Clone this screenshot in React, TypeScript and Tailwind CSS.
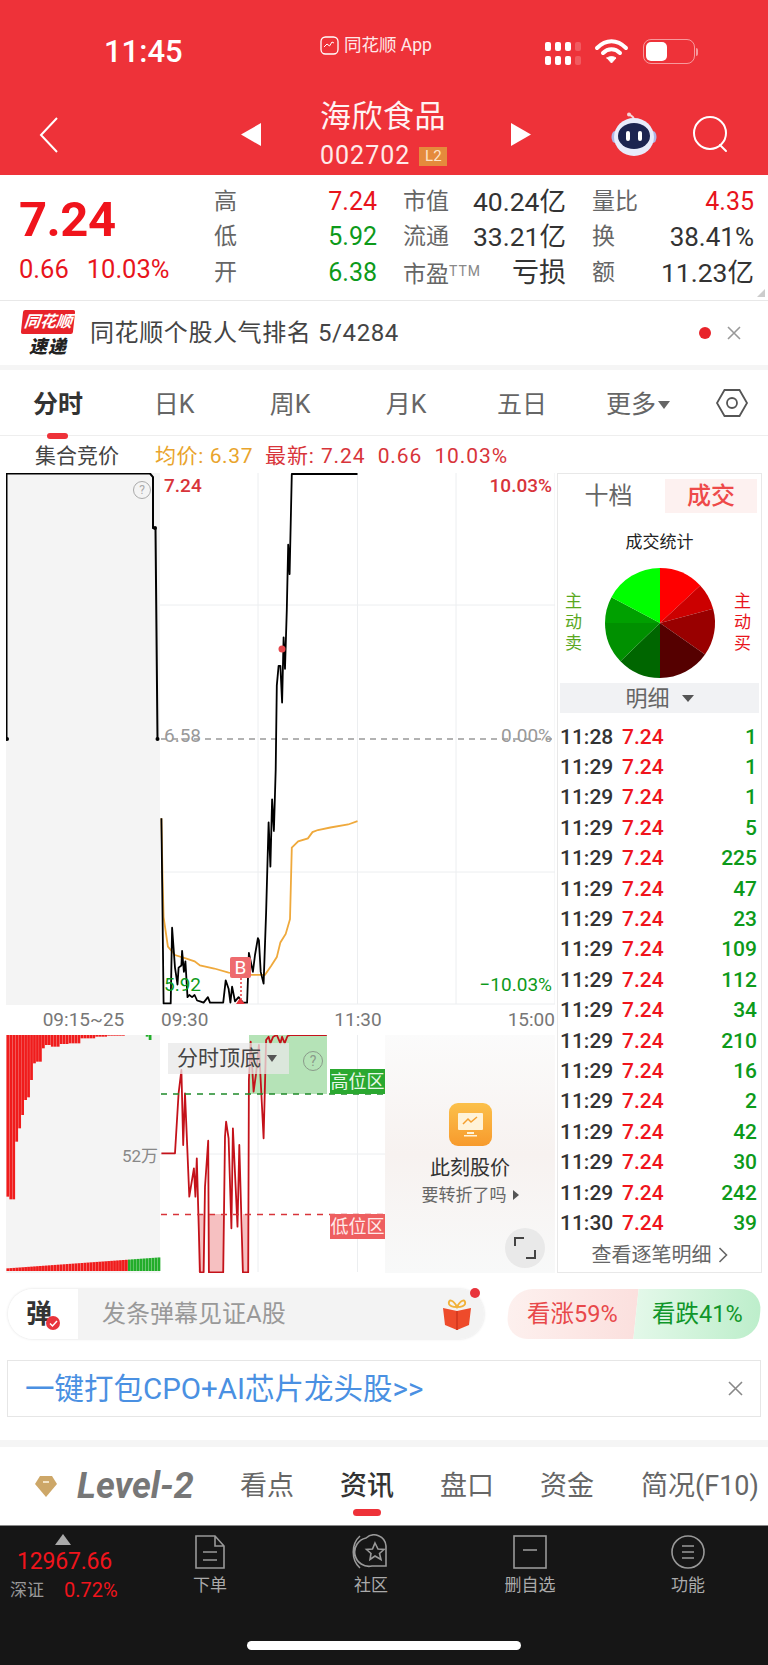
const RED = "#e8141c";

// traced from the reference chart, in zoomed crop coordinates
const priceTrace = [[452,1065],[458,1505],[478,1505],[482,1325],[490,1420],[497,1460],[500,1420],[508,1415],[510,1380],[515,1430],[519,1405],[525,1490],[530,1485],[538,1490],[545,1485],[552,1498],[560,1500],[570,1503],[582,1490],[588,1503],[625,1503],[632,1450],[640,1470],[645,1503],[650,1465],[658,1500],[668,1490],[680,1503],[692,1503],[697,1385],[708,1430],[714,1390],[722,1350],[725,1355],[730,1430],[738,1458],[745,1290],[752,1075],[757,1180],[762,1020],[767,1095],[772,950],[775,750],[780,703],[785,703],[790,790],[794,635],[798,710],[803,570],[807,415],[811,485],[817,247],[1001,247]];
const avgTrace = [[452,1065],[455,1200],[458,1300],[470,1370],[490,1390],[520,1398],[545,1405],[560,1415],[600,1422],[640,1432],[700,1437],[742,1437],[760,1415],[775,1395],[785,1360],[800,1340],[812,1305],[817,1135],[835,1120],[862,1113],[875,1098],[890,1093],[925,1087],[975,1080],[1001,1072]];
const topBottomTrace = [[452,400],[490,400],[500,220],[508,150],[513,375],[518,220],[530,530],[543,445],[547,530],[551,415],[560,757],[570,757],[574,500],[583,362],[585,757],[625,757],[630,350],[633,305],[640,355],[648,625],[652,325],[665,620],[670,375],[680,757],[695,757],[697,180],[702,65],[710,215],[717,160],[725,75],[738,355],[745,60],[752,50],[757,70],[765,50],[775,45],[785,70],[790,50],[797,70],[805,48],[815,45],[915,45]];
const redBarEdge = [[18,530],[25,538],[35,460],[42,365],[50,325],[55,285],[65,240],[72,232],[82,180],[90,130],[100,125],[112,85],[125,75],[135,80],[160,72],[190,70],[225,55],[260,50],[300,47],[350,43]];
const greenBarEdge = [[355,43],[385,45],[400,50],[415,60],[420,44],[445,44]];

const mainPts = (t: number[][]) => t.map(([x, y]) => `${(x / 2.8).toFixed(1)},${(y / 2.376 + 370).toFixed(1)}`).join(" ");
const lowPts = (t: number[][]) => t.map(([x, y]) => `${(x / 2.8).toFixed(1)},${(y / 3 + 1020).toFixed(1)}`).join(" ");

function edgeAt(edge: number[][], x: number) {
  let last = edge[0][1];
  for (const [ex, ey] of edge) {
    if (ex > x) return last;
    last = ey;
  }
  return last;
}

const barXs = Array.from({ length: 52 }, (_, i) => 18 + i * 8.3);

const quoteRows = [
  [["高", "7.24", "text-[25px] text-[#e8141c]"], ["市值", "40.24亿", "text-[26.500px] text-[#333]"], ["量比", "4.35", "text-[25px] text-[#e8141c]"]],
  [["低", "5.92", "text-[25px] text-[#0d9a1a]"], ["流通", "33.21亿", "text-[26.500px] text-[#333]"], ["换", "38.41%", "text-[26px] text-[#333]"]],
  [["开", "6.38", "text-[25px] text-[#0d9a1a]"], ["市盈", "亏损", "text-[27px] text-[#333]"], ["额", "11.23亿", "text-[26.500px] text-[#333]"]],
];

const ticks = [
  ["11:28", "1"], ["11:29", "1"], ["11:29", "1"], ["11:29", "5"], ["11:29", "225"], ["11:29", "47"],
  ["11:29", "23"], ["11:29", "109"], ["11:29", "112"], ["11:29", "34"], ["11:29", "210"], ["11:29", "16"],
  ["11:29", "2"], ["11:29", "42"], ["11:29", "30"], ["11:29", "242"], ["11:30", "39"],
];

const slices = [
  [0, 47, "#ff0000"], [47, 75, "#cc0000"], [75, 125, "#990000"], [125, 180, "#550000"],
  [180, 226, "#006600"], [226, 270, "#009000"], [270, 298, "#00a000"], [298, 360, "#00ff00"],
] as const;

function slicePath(from: number, to: number) {
  const r = 55;
  const pt = (a: number) => `${(60 + r * Math.sin((a * Math.PI) / 180)).toFixed(2)} ${(60 - r * Math.cos((a * Math.PI) / 180)).toFixed(2)}`;
  return `M60 60 L${pt(from)} A${r} ${r} 0 0 1 ${pt(to)} Z`;
}

function StatusBar() {
  return (
    <div className="flex h-[100px] items-start text-white">
      <div className="ml-[104px] mt-[33px] w-[216px] text-[31px] leading-[38px] font-medium">11:45</div>
      <div className="mt-[33px] flex w-[225px] items-center gap-[5px] text-[17.500px] leading-[24px] text-[#ffe9e9]">
        <svg width="19" height="19" viewBox="0 0 19 19" fill="none" stroke="#fff" strokeWidth="1.3">
          <rect x="1" y="1" width="17" height="17" rx="4.5" />
          <path d="M4 11l3-3 2.500 2L12 6l2 1" strokeWidth="1" />
        </svg>
        <span>同花顺 App</span>
      </div>
      <div className="mt-[42px] grid grid-cols-4 gap-x-[4px] gap-y-[5px]">
        {[0, 1, 2, 3, 4, 5, 6, 7].map((i) => (
          <span key={i} className={`h-[9px] w-[6px] rounded-[2px] ${i === 3 || i === 7 ? "bg-white/20" : "bg-white"}`} />
        ))}
      </div>
      <svg className="ml-[13px] mt-[38px]" width="35" height="26" viewBox="0 0 35 26" fill="none" stroke="#fff" strokeLinecap="round">
        <path d="M3 10c9-9 20-9 29 0" strokeWidth="4" />
        <path d="M9 15c5-5 12-5 17 0" strokeWidth="4" />
        <path d="M13 20l4.500 5 4.500-5c-3-2-6-2-9 0z" fill="#fff" strokeWidth="1" />
      </svg>
      <div className="ml-[14px] mt-[39px] flex items-center">
        <div className="h-[25px] w-[52px] rounded-[8px] border border-white/50 p-[2px]">
          <div className="h-full w-[21px] rounded-[5px] bg-white" />
        </div>
        <div className="ml-[1px] h-[8px] w-[2px] rounded-r bg-white/50" />
      </div>
    </div>
  );
}

function NavBar() {
  return (
    <div className="relative flex h-[75px] items-start text-white">
      <svg className="ml-[39px] mt-[17px]" width="20" height="36" viewBox="0 0 20 36" fill="none" stroke="#fff" strokeWidth="2">
        <path d="M18 1L2 18l16 17" />
      </svg>
      <svg className="ml-[182px] mt-[23px]" width="20" height="23" viewBox="0 0 20 23" fill="#fff">
        <path d="M20 0v23L0 11.500z" />
      </svg>
      <div className="ml-[59px] mt-[-4px] w-[191px]">
        <div className="text-[31px] leading-[42px] tracking-[0.5px] text-[#fff3f3]">海欣食品</div>
        <div className="mt-[2px] flex items-center">
          <span className="text-[25px] leading-[32px] tracking-[1px] text-[#ffeaea]">002702</span>
          <span className="ml-[9px] flex h-[19px] w-[28px] items-center justify-center bg-[#e58a3c] text-[15px] text-[#ffe4c8]">L2</span>
        </div>
      </div>
      <svg className="mt-[23px]" width="20" height="23" viewBox="0 0 20 23" fill="#fff">
        <path d="M0 0v23l20-11.500z" />
      </svg>
      <svg className="ml-[80px] mt-[12px]" width="46" height="44" viewBox="0 0 46 44">
        <path d="M23 7c-1-3-3-3-5-5" stroke="#f5d5d8" strokeWidth="2" fill="none" />
        <circle cx="18" cy="2.500" r="2" fill="#f5d5d8" />
        <ellipse cx="4" cy="25" rx="3.500" ry="6" fill="#aeb6e6" />
        <ellipse cx="42" cy="25" rx="3.500" ry="6" fill="#aeb6e6" />
        <ellipse cx="23" cy="25" rx="20" ry="19" fill="#e8ecfb" />
        <ellipse cx="23" cy="24" rx="16" ry="13" fill="#1c2450" />
        <rect x="15" y="19" width="4" height="10" rx="2" fill="#fff" />
        <rect x="27" y="19" width="4" height="10" rx="2" fill="#fff" />
      </svg>
      <svg className="ml-[35px] mt-[15px]" width="38" height="38" viewBox="0 0 38 38" fill="none" stroke="#fff" strokeWidth="2">
        <circle cx="18" cy="18" r="16" />
        <path d="M28 30l6 6" strokeLinecap="round" />
      </svg>
    </div>
  );
}

function QuotePanel() {
  return (
    <div className="relative flex h-[125px] bg-white">
      <div className="w-[214px] pl-[19px] pt-[14px]">
        <div className="text-[49px] leading-[62px] font-bold tracking-[-0.5px] text-[#f0141c]">7.24</div>
        <div className="mt-[2px] flex gap-[18px] text-[25.500px] leading-[32px] text-[#e8141c]">
          <span>0.66</span>
          <span>10.03%</span>
        </div>
      </div>
      <div className="w-[540px] pt-[10px]">
        {quoteRows.map((row, r) => (
          <div key={r} className="grid h-[34.500px] grid-cols-[163px_163px_162px] gap-x-[26px]">
            {row.map(([label, value, color], c) => (
              <div key={c} className="flex items-center justify-between leading-[34px]">
                <span className="text-[23px] text-[#666]">
                  {label}
                  {label === "市盈" && <span className="align-[6px] text-[14px] tracking-[1px] text-[#888]">TTM</span>}
                </span>
                <span className={color}>{value}</span>
              </div>
            ))}
          </div>
        ))}
      </div>
      <span className="absolute bottom-[3px] right-[3px] border-b-[8px] border-l-[8px] border-b-[#ccc] border-l-transparent" />
    </div>
  );
}

function RankBanner() {
  return (
    <div className="flex h-[65px] items-center border-t border-[#e8e8e8] bg-white pl-[22px] pr-[26px]">
      <div className="w-[52px]">
        <div className="flex h-[24px] -skew-x-6 items-center justify-center rounded-[2px] bg-[#e8232a] text-[16px] leading-none font-bold text-white italic">同花顺</div>
        <div className="mt-[3px] text-center text-[18px] leading-[20px] font-black tracking-[1px] text-[#222] italic">速递</div>
      </div>
      <span className="ml-[16px] flex-1 text-[24px] tracking-[0.6px] text-[#444]">同花顺个股人气排名 5/4284</span>
      <span className="h-[12px] w-[12px] rounded-full bg-[#e8232a]" />
      <svg className="ml-[15px]" width="16" height="16" viewBox="0 0 16 16" stroke="#999" strokeWidth="1.600">
        <path d="M2 2l12 12M14 2L2 14" />
      </svg>
    </div>
  );
}

function ChartTabs() {
  return (
    <div className="flex h-[66px] border-b border-[#eee] bg-white">
      <div className="grid w-[696px] grid-cols-6 text-center text-[25px] leading-[69px] text-[#666]">
        <div className="relative font-bold text-[#333]">
          分时
          <span className="absolute bottom-[0px] left-[47px] h-[6px] w-[21px] rounded-full bg-[#ee3239]" />
        </div>
        <div>日K</div>
        <div>周K</div>
        <div>月K</div>
        <div>五日</div>
        <div className="flex items-center justify-center">
          更多
          <span className="ml-[2px] border-x-[6px] border-t-[8px] border-x-transparent border-t-[#666]" />
        </div>
      </div>
      <div className="flex flex-1 items-center justify-center">
        <svg width="34" height="30" viewBox="0 0 34 30" fill="none" stroke="#555" strokeWidth="1.800">
          <path d="M9.500 2h15L32 15l-7.500 13h-15L2 15z" />
          <circle cx="17" cy="15" r="5" />
        </svg>
      </div>
    </div>
  );
}

function AuctionRow() {
  return (
    <div className="flex h-[37px] items-center bg-white pt-[4px] text-[21px]">
      <span className="ml-[35px] w-[120px] text-[#444]">集合竞价</span>
      <span className="w-[110px] whitespace-nowrap tracking-[0.6px] text-[#e9a42c]">均价: 6.37</span>
      <span className="tracking-[0.9px] whitespace-nowrap text-[#d8343a]">最新: 7.24&nbsp;&nbsp;0.66&nbsp;&nbsp;10.03%</span>
    </div>
  );
}

function PriceChart() {
  return (
    <div className="relative flex h-[532px]">
      <div className="w-[154px] bg-[#f4f4f4]" />
      <div className="flex-1 bg-white" />
      <svg className="absolute inset-0" width="549" height="532" viewBox="6 473 549 532" fill="none">
        <path d="M160 605H555M160 872H555M160 1004H555M258 473V1004M357.500 473V1004M456 473V1004M555 473V1004" stroke="#eceef0" />
        <path d="M161 739H555" stroke="#999" strokeWidth="1.300" strokeDasharray="6 5" />
        <polyline points={mainPts(avgTrace)} stroke="#efa93c" strokeWidth="1.800" />
        <polyline points={mainPts(priceTrace)} stroke="#000" strokeWidth="1.800" strokeLinejoin="round" />
        <path d="M6.500 739V473.500H150L153 477V528L155.500 528.500L157.500 739" stroke="#000" strokeWidth="2" />
        <circle cx="7" cy="739" r="2" fill="#000" />
        <circle cx="155" cy="528" r="2" fill="#000" />
        <circle cx="157.500" cy="739" r="2" fill="#000" />
        <circle cx="282" cy="649" r="3.500" fill="#e5484d" />
        <path d="M241 978V1000" stroke="#ee6b6e" strokeWidth="2" strokeDasharray="2 2" />
        <path d="M236 1004l4-6 5 6z" fill="#e8343c" />
      </svg>
      <span className="absolute left-[158px] top-[0px] text-[19px] leading-[26px] font-medium text-[#d8343a]">7.24</span>
      <span className="absolute right-[3px] top-[0px] text-[19px] leading-[26px] font-medium text-[#d8343a]">10.03%</span>
      <span className="absolute left-[158px] top-[250px] text-[19px] leading-[26px] text-[#999]">6.58</span>
      <span className="absolute right-[3px] top-[250px] text-[19px] leading-[26px] text-[#999]">0.00%</span>
      <span className="absolute left-[158px] top-[499px] text-[19px] leading-[26px] text-[#0d9a1a]">5.92</span>
      <span className="absolute right-[3px] top-[499px] text-[19px] leading-[26px] text-[#0d9a1a]">−10.03%</span>
      <span className="absolute left-[127px] top-[8px] flex h-[18px] w-[18px] items-center justify-center rounded-full border border-[#aaa] text-[12px] leading-none text-[#aaa]">?</span>
      <span className="absolute left-[224px] top-[484px] flex h-[21px] w-[21px] items-center justify-center rounded-[2px] bg-[#ee6b6e] text-[19px] leading-none text-white">B</span>
    </div>
  );
}

function AxisRow() {
  return (
    <div className="flex h-[30px] items-center bg-white text-[19px] text-[#777]">
      <span className="w-[155px] text-center">09:15~25</span>
      <div className="flex flex-1 justify-between">
        <span>09:30</span>
        <span>11:30</span>
        <span>15:00</span>
      </div>
    </div>
  );
}

function SignalChart() {
  return (
    <div className="relative flex h-[238px]">
      <div className="w-[154px] bg-[#f4f4f4]" />
      <div className="flex-1 bg-white" />
      <svg className="absolute inset-0" width="549" height="238" viewBox="6 1035 549 238" fill="none">
        {barXs.map((x) => {
          const green = x >= 352;
          const edge = green ? greenBarEdge : redBarEdge;
          const px = x / 2.8;
          const bottom = edgeAt(edge, x) / 3 + 1020;
          const lowTop = 1020 + (745 - ((x - 18) / 427) * 33) / 3;
          return (
            <g key={x} fill={green ? "#22ad2a" : "#f01c1c"}>
              <rect x={px} y={1034.500} width="2.750" height={Math.max(bottom - 1034.500, 0.5)} />
              <rect x={px} y={lowTop} width="2.750" height={1271 - lowTop} />
            </g>
          );
        })}
        <path d="M258 1035V1272M357.500 1035V1272M160 1154H385" stroke="#eceef0" />
        <rect x="249" y="1035" width="78" height="59" fill="#b5e3b7" />
        <path d="M198.500 1214h6v58h-6zM209 1214h14.500v58H209zM243 1214h5.500v58H243z" fill="#f6c0c1" />
        <polyline points={lowPts(topBottomTrace)} stroke="#c4121a" strokeWidth="1.800" strokeLinejoin="round" />
        <path d="M161 1094H385" stroke="#1f8a2a" strokeWidth="1.600" strokeDasharray="6 6" />
        <path d="M161 1214.500H385" stroke="#d8343a" strokeWidth="1.600" strokeDasharray="6 6" />
      </svg>
      <div className="absolute left-[162px] top-[8px] flex h-[31px] w-[121px] items-center bg-[#e8e8e8]/75 pl-[9px] text-[21px] text-[#444]">
        分时顶底
        <span className="ml-[6px] border-x-[5px] border-t-[7px] border-x-transparent border-t-[#555]" />
      </div>
      <span className="absolute left-[297px] top-[16px] flex h-[20px] w-[20px] items-center justify-center rounded-full border border-[#8a9a8a] text-[14px] leading-none text-[#8a9a8a]">?</span>
      <span className="absolute left-[324px] top-[34px] flex h-[25px] w-[55px] items-center justify-center bg-[#2aa830] text-[18px] text-[#e8f8e8]">高位区</span>
      <span className="absolute left-[324px] top-[179px] flex h-[25px] w-[55px] items-center justify-center bg-[#ee5f60] text-[18px] text-[#ffe9e9]">低位区</span>
      <span className="absolute left-[116px] top-[109px] text-[17px] leading-[24px] text-[#888]">52万</span>
      <div className="absolute bottom-0 right-0 top-0 flex w-[170px] flex-col items-center bg-gradient-to-b from-[#fbfbfb] via-[#f7f2f0] to-[#f8f9f9] pt-[68px]">
        <div className="flex h-[43px] w-[43px] items-center justify-center rounded-[9px] bg-gradient-to-b from-[#fbc04a] to-[#f79a2c]">
          <svg width="27" height="25" viewBox="0 0 27 25">
            <rect x="1" y="1" width="25" height="17" rx="1" fill="#fff3d8" />
            <path d="M6 12l5-5 3 3 6-5" stroke="#f5a02e" strokeWidth="1.500" fill="none" />
            <path d="M10 20h7v2h-7zM7 23h13v1.500H7z" fill="#fff3d8" />
          </svg>
        </div>
        <div className="mt-[7px] text-[20px] leading-[30px] text-[#333]">此刻股价</div>
        <div className="flex items-center text-[17px] leading-[24px] text-[#666]">
          要转折了吗
          <span className="ml-[6px] border-y-[5px] border-l-[6px] border-y-transparent border-l-[#555]" />
        </div>
      </div>
      <div className="absolute right-[10px] top-[193px] flex h-[40px] w-[40px] items-center justify-center rounded-full bg-[#e9e9e9]">
        <svg width="24" height="24" viewBox="0 0 24 24" fill="none" stroke="#444" strokeWidth="2">
          <path d="M2 10V2h9M22 14v8h-9" />
        </svg>
      </div>
    </div>
  );
}

function TradeColumn() {
  return (
    <div className="ml-[2px] flex w-[205px] flex-col border border-[#e8e8e8] bg-white">
      <div className="flex h-[40px] items-center pl-[1px] pt-[4px]">
        <span className="w-[99px] text-center text-[24px] text-[#666]">十档</span>
        <span className="ml-[7px] flex h-[34px] w-[92px] items-center justify-center bg-[#fdf1f0] text-[24px] font-medium text-[#ee4a4a]">成交</span>
      </div>
      <div className="mt-[16px] text-center text-[17px] leading-[24px] text-[#222]">成交统计</div>
      <div className="mt-[10px] flex h-[117px] items-center justify-between px-[7px]">
        <div className="w-[20px] text-[17px] leading-[21px] text-[#5aa81e]">主<br />动<br />卖</div>
        <svg width="120" height="120" viewBox="0 0 120 120">
          {slices.map(([from, to, fill]) => (
            <path key={from} d={slicePath(from, to)} fill={fill} />
          ))}
        </svg>
        <div className="w-[20px] text-[17px] leading-[21px] text-[#e8141c]">主<br />动<br />买</div>
      </div>
      <div className="mx-[2px] mt-[2px] flex h-[30px] items-center justify-center bg-[#f1f2f4] text-[22px] text-[#666]">
        明细
        <span className="ml-[12px] border-x-[6px] border-t-[7px] border-x-transparent border-t-[#555]" />
      </div>
      <div className="mt-[9px] pl-[2px] pr-[4px]">
        {ticks.map(([time, vol], i) => (
          <div key={i} className="flex h-[30.400px] items-center text-[21px] leading-none font-medium">
            <span className="w-[62px] text-[#333]">{time}</span>
            <span className="text-[#f0141c]">7.24</span>
            <span className="ml-auto text-[#0d9a1a]">{vol}</span>
          </div>
        ))}
      </div>
      <div className="flex flex-1 items-center justify-center text-[20px] text-[#666]">
        查看逐笔明细
        <svg className="ml-[6px]" width="10" height="16" viewBox="0 0 10 16" fill="none" stroke="#666" strokeWidth="1.600">
          <path d="M1.500 1l7 7-7 7" />
        </svg>
      </div>
    </div>
  );
}

function InteractRow() {
  return (
    <div className="mt-[16px] flex h-[50px] pl-[8px]">
      <div className="relative flex w-[476px] overflow-visible rounded-full shadow-[0_0_3px_#ddd]">
        <div className="relative w-[70px] rounded-l-full bg-white pl-[18px] text-[26px] leading-[50px] font-bold text-[#333]">
          弹
          <span className="absolute left-[38px] top-[27px] flex h-[14px] w-[14px] items-center justify-center rounded-full bg-[#e8343c]">
            <svg width="9" height="9" viewBox="0 0 9 9" fill="none" stroke="#fff" strokeWidth="1.500">
              <path d="M1 4.500l2.500 2.500L8 2" />
            </svg>
          </span>
        </div>
        <div className="flex flex-1 items-center justify-between rounded-r-full bg-[#f3f3f3] pl-[24px] pr-[12px] text-[24px] text-[#999]">
          <span>发条弹幕见证A股</span>
          <svg width="30" height="32" viewBox="0 0 30 32">
            <path d="M15 9C11 1 6 1 7 6c1 3 5 3 8 3 3 0 7 0 8-3 1-5-4-5-8 3z" fill="none" stroke="#f1b23a" strokeWidth="2" />
            <path d="M1 10l14 3 14-3-2 17-12 5-12-5z" fill="#ee4b2b" />
            <path d="M15 13v19" stroke="#d63a20" strokeWidth="2" />
          </svg>
        </div>
        <span className="absolute right-[4px] top-[-1px] h-[10px] w-[10px] rounded-full bg-[#e8343c]" />
      </div>
      <div className="ml-[24px] flex w-[252px] text-[23.500px] leading-[50px]">
        <div className="h-full w-[128px] -skew-x-6 rounded-l-[22px] bg-gradient-to-r from-[#fdf0ee] to-[#fbe0de] pl-[19px] text-[#e8484a]">
          <div className="skew-x-6">看涨59%</div>
        </div>
        <div className="h-full w-[124px] -skew-x-6 rounded-r-[22px] bg-gradient-to-r from-[#e3f8e9] to-[#bdeecb] pl-[16px] text-[#10962a]">
          <div className="skew-x-6">看跌41%</div>
        </div>
      </div>
    </div>
  );
}

function AdBanner() {
  return (
    <div className="mx-[7px] mt-[21px] flex h-[57px] items-center justify-between border border-[#e6e6e6] pl-[17px] pr-[17px]">
      <span className="pt-[2px] text-[29.500px] text-[#4a90e2]">一键打包CPO+AI芯片龙头股&gt;&gt;</span>
      <svg width="15" height="15" viewBox="0 0 15 15" stroke="#888" strokeWidth="1.600">
        <path d="M1 1l13 13M14 1L1 14" />
      </svg>
    </div>
  );
}

function InfoTabs() {
  return (
    <div className="flex h-[78px] items-center bg-white text-[27px] text-[#666]">
      <div className="flex w-[217px] items-center pl-[34px]">
        <svg width="24" height="24" viewBox="0 0 24 24">
          <path d="M6 2h12l5 8-11 13L1 10z" fill="#cda768" />
          <path d="M9 8h6" stroke="#f3e3c4" strokeWidth="2" />
        </svg>
        <span className="ml-[19px] text-[36px] leading-none font-bold text-[#777] italic">Level-2</span>
      </div>
      <span className="w-[100px] text-center">看点</span>
      <span className="relative w-[100px] text-center font-medium text-[#333]">
        资讯
        <span className="absolute left-[36px] top-[43px] h-[7px] w-[28px] rounded-full bg-[#ee3239]" />
      </span>
      <span className="w-[100px] text-center">盘口</span>
      <span className="w-[100px] text-center">资金</span>
      <span className="ml-[24px] whitespace-nowrap">简况(F10)</span>
    </div>
  );
}

function BottomNav() {
  const stroke = { fill: "none", stroke: "#999", strokeWidth: 1.600 };
  const items = [
    {
      label: "下单",
      w: "w-[162px]",
      icon: (
        <svg width="32" height="36" viewBox="0 0 32 36" {...stroke}>
          <path d="M2 2h19l9 10v22H2zM21 2v10h9M9 18h14M9 26h14" />
        </svg>
      ),
    },
    {
      label: "社区",
      w: "w-[160px]",
      icon: (
        <svg width="38" height="36" viewBox="0 0 38 36" {...stroke}>
          <path d="M8 2C-1 10-1 26 8 34M14 4a12 12 0 0 1 20 8v20H20A14 14 0 0 1 14 4z" />
          <path d="M23 9l3 6 6 .5-4.500 4 1.500 6-6-3.500-5 3.500 1-6-4.500-4 6-.5z" />
        </svg>
      ),
    },
    {
      label: "删自选",
      w: "w-[158px]",
      icon: (
        <svg width="36" height="36" viewBox="0 0 36 36" {...stroke}>
          <rect x="2" y="2" width="32" height="32" />
          <path d="M11 16h14" />
        </svg>
      ),
    },
    {
      label: "功能",
      w: "w-[158px]",
      icon: (
        <svg width="36" height="36" viewBox="0 0 36 36" {...stroke}>
          <circle cx="18" cy="18" r="16" />
          <path d="M12 12h12M12 18h12M12 24h12" />
        </svg>
      ),
    },
  ];
  return (
    <div className="relative flex h-[140px] items-start border-t border-[#888] bg-[#161616] pt-[8px]">
      <div className="w-[129px] pl-[10px]">
        <div className="ml-[45px] h-0 w-0 border-x-[8px] border-b-[11px] border-x-transparent border-b-[#aaa]" />
        <div className="ml-[7px] mt-[3px] text-[23px] leading-[28px] tracking-[-0.2px] text-[#f0141c]">12967.66</div>
        <div className="mt-[1px] flex text-[17px] leading-[26px]">
          <span className="w-[54px] text-[#999]">深证</span>
          <span className="text-[20px] text-[#f0141c]">0.72%</span>
        </div>
      </div>
      {items.map((item) => (
        <div key={item.label} className={`flex flex-col items-center ${item.w}`}>
          {item.icon}
          <span className="mt-[3px] text-[17px] leading-[24px] text-[#aaa]">{item.label}</span>
        </div>
      ))}
      <div className="absolute bottom-[15px] left-[247px] h-[9px] w-[274px] rounded-full bg-white" />
    </div>
  );
}

export default function App() {
  return (
    <div className="flex h-[1665px] w-[768px] flex-col overflow-hidden bg-white font-[Roboto,'Noto_Sans_CJK_SC',sans-serif]">
      <header className="h-[175px] bg-[#ee3239]">
        <StatusBar />
        <NavBar />
      </header>
      <QuotePanel />
      <RankBanner />
      <div className="h-[5px] bg-[#f5f5f5]" />
      <ChartTabs />
      <AuctionRow />
      <div className="flex h-[800px] pl-[6px]">
        <div className="w-[549px]">
          <PriceChart />
          <AxisRow />
          <SignalChart />
        </div>
        <TradeColumn />
      </div>
      <InteractRow />
      <AdBanner />
      <div className="mt-[23px] h-[7px] bg-[#f5f5f5]" />
      <InfoTabs />
      <BottomNav />
    </div>
  );
}
